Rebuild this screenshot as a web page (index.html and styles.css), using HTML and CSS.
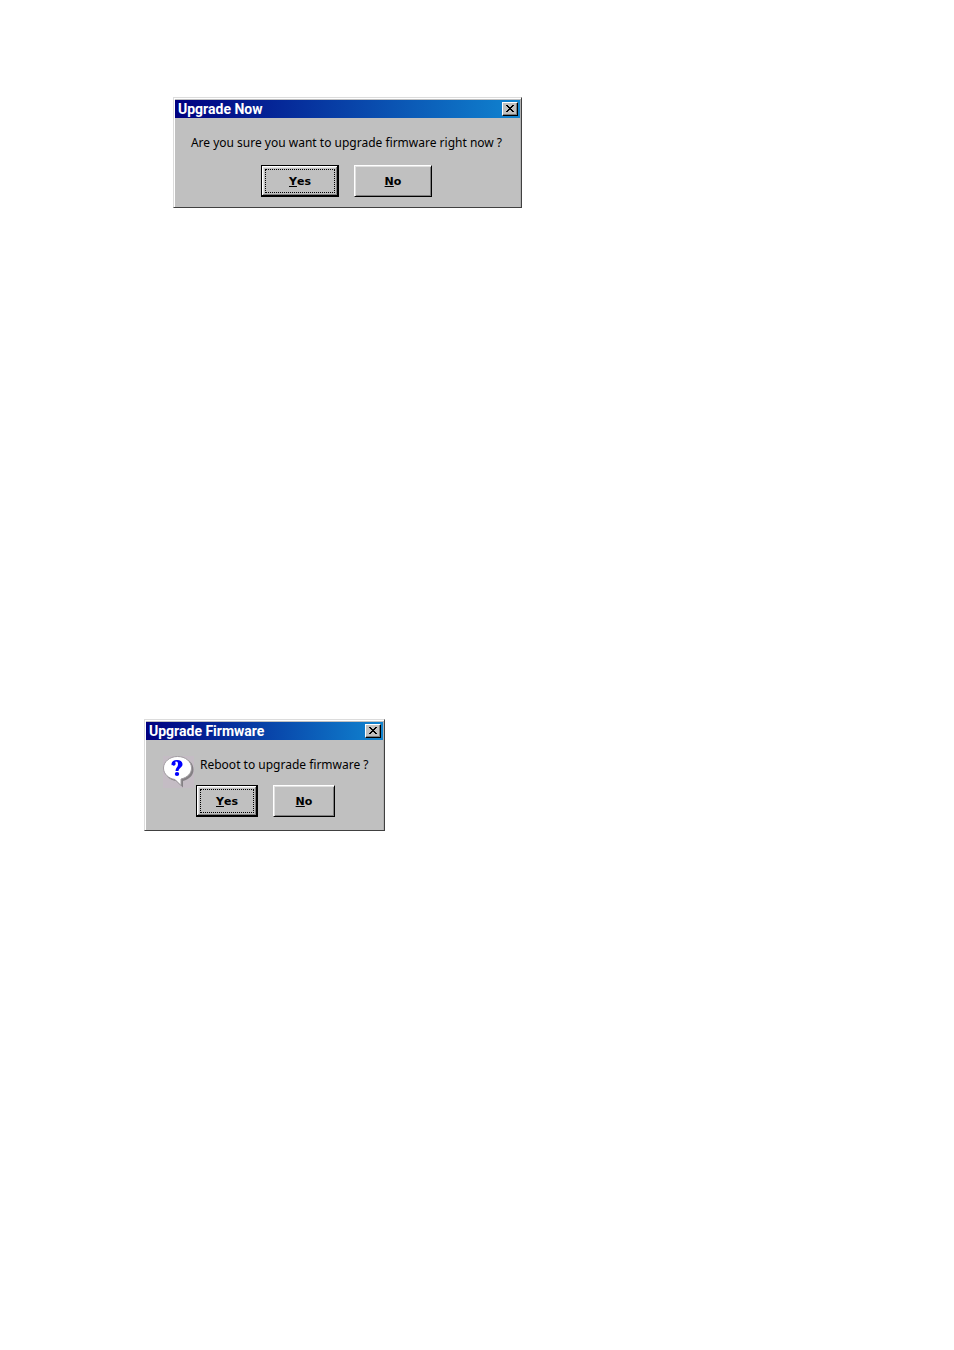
FILE: index.html
```html
<!DOCTYPE html>
<html lang="en">
<head>
<meta charset="utf-8">
<title>Upgrade dialogs</title>
<link rel="stylesheet" href="styles.css">
</head>
<body>
<main class="page">
  <section class="dialog dialog-confirm" role="dialog" aria-labelledby="confirm-title">
    <header class="titlebar">
      <h2 class="title" id="confirm-title">Upgrade Now</h2>
      <button class="close" type="button" aria-label="Close">
        <svg width="8" height="7" viewBox="0 0 8 7" shape-rendering="crispEdges" aria-hidden="true"><path d="M0 0h2v1h1v1h2v-1h1v-1h2v1h-1v1h-1v1h-1v1h1v1h1v1h1v1h-2v-1h-1v-1h-2v1h-1v1h-2v-1h1v-1h1v-1h1v-1h-1v-1h-1v-1h-1z"/></svg>
      </button>
    </header>
    <div class="content">
      <p class="message">Are you sure you want to upgrade firmware right now ?</p>
      <div class="actions">
        <button class="button button-default" type="button"><span class="label"><u>Y</u>es</span></button>
        <button class="button" type="button"><span class="label"><u>N</u>o</span></button>
      </div>
    </div>
  </section>

  <section class="dialog dialog-reboot" role="dialog" aria-labelledby="reboot-title">
    <header class="titlebar">
      <h2 class="title" id="reboot-title">Upgrade Firmware</h2>
      <button class="close" type="button" aria-label="Close">
        <svg width="8" height="7" viewBox="0 0 8 7" shape-rendering="crispEdges" aria-hidden="true"><path d="M0 0h2v1h1v1h2v-1h1v-1h2v1h-1v1h-1v1h-1v1h1v1h1v1h1v1h-2v-1h-1v-1h-2v1h-1v1h-2v-1h1v-1h1v-1h1v-1h-1v-1h-1v-1h-1z"/></svg>
      </button>
    </header>
    <div class="content">
      <div class="prompt">
        <svg class="question" width="32" height="33" viewBox="0 0 32 33" aria-hidden="true">
          <path class="question-back" d="M0 1h31v32H0z"/>
          <path class="question-shadow" d="M17 3c8 0 13.500 5 13.500 11.500c0 6-4 9.500-10.500 11.500V32.500L13 26C7 25 2 21 2 15S9 3 17 3z"/>
          <path class="question-bubble" d="M14.500 1.500C22.500 1.500 28.500 6.500 28.500 13c0 5.500-4 9.500-10.500 11V30.500L12 24.500C5.500 23.500 .5 19 .5 13S6.500 1.500 14.500 1.500z"/>
          <path class="question-mark" d="M8.500 9.500C8.500 6.500 10.500 5 14 5c3.500 0 5.500 1.500 5.500 4.500c0 3-4 3.500-4 6.500H12.500c0-3 2.500-4 2.500-6.500c0-2-.5-3-2-3c-.8 0-.8 .5-.5 1.500c.4 1.500-.3 2.700-1.700 2.700C9.300 10.700 8.500 10.300 8.500 9.500z"/>
          <ellipse class="question-mark" cx="14" cy="19" rx="2.200" ry="1.900"/>
        </svg>
        <p class="message">Reboot to upgrade firmware ?</p>
      </div>
      <div class="actions">
        <button class="button button-default" type="button"><span class="label"><u>Y</u>es</span></button>
        <button class="button" type="button"><span class="label"><u>N</u>o</span></button>
      </div>
    </div>
  </section>
</main>
</body>
</html>
```
FILE: styles.css
```css
* {
  box-sizing: border-box;
}

body {
  margin: 0;
  background: #fff;
  color: #000;
  font-family: "Noto Sans", "Open Sans", sans-serif;
  font-size: 12px;
}

.page {
  display: flex;
  flex-direction: column;
  align-items: flex-start;
  gap: 511px;
  padding: 97px 144px;
}

.dialog {
  max-width: 100%;
  padding: 2px 1px 10px 1px;
  background: #c0c0c0;
  border: 1px solid;
  border-color: #dcdcdc #404040 #404040 #dcdcdc;
  box-shadow: inset 1px 1px #fff, inset -1px 0 #b0b0b0;
}

.dialog-confirm {
  width: 349px;
  margin-left: 29px;
}

.dialog-reboot {
  width: 241px;
  padding-bottom: 13px;
}

.titlebar {
  display: flex;
  align-items: center;
  justify-content: space-between;
  height: 18px;
  padding: 0 2px 0 3px;
  background: linear-gradient(to right, #000080, #1084d0);
}

.title {
  margin: 0;
  color: #fff;
  font-family: Roboto, "Liberation Sans", sans-serif;
  font-size: 14px;
  font-weight: 700;
  line-height: 18px;
}

.close {
  display: grid;
  place-items: center;
  width: 16px;
  height: 14px;
  padding: 0 1px 1px 0;
  background: #c0c0c0;
  border: 1px solid;
  border-color: #fff #000 #000 #fff;
  box-shadow: inset -1px -1px #808080;
}

.content {
  display: flex;
  flex-direction: column;
  align-items: center;
  padding-top: 15px;
}

.dialog-confirm .content {
  padding-right: 2px;
}

.dialog-reboot .content {
  padding-left: 2px;
}

.message {
  margin: 0;
  line-height: 20px;
}

.dialog-confirm .message {
  margin-bottom: 12px;
}

.prompt {
  display: flex;
  align-items: flex-start;
  align-self: stretch;
  gap: 5px;
  height: 30px;
  padding-left: 15px;
}

.question {
  flex: none;
}

.question-back {
  fill: #c4bcc4;
}

.question-shadow {
  fill: #848084;
}

.question-bubble {
  fill: #fff;
  stroke: #a09ca0;
}

.question-mark {
  fill: #00f;
}

.actions {
  display: flex;
  gap: 15px;
}

.button {
  width: 78px;
  height: 32px;
  padding: 3px;
  background: #c0c0c0;
  border: 1px solid;
  border-color: #fff #000 #000 #fff;
  box-shadow: inset 1px 1px #e0e0e0, inset -1px -1px #808080;
  color: #000;
  font-family: "DejaVu Sans", sans-serif;
  font-size: 11px;
  font-weight: 700;
}

.dialog-reboot .button {
  width: 62px;
}

.button-default {
  border: 1px solid #000;
  box-shadow: inset -1px -1px #000, inset 1px 1px #fff, inset -2px -2px #808080, inset 2px 2px #e0e0e0;
}

.label {
  display: grid;
  grid-auto-flow: column;
  place-content: center;
  height: 100%;
  border: 1px solid transparent;
}

.button-default .label {
  border: 1px dotted #000;
}
```
